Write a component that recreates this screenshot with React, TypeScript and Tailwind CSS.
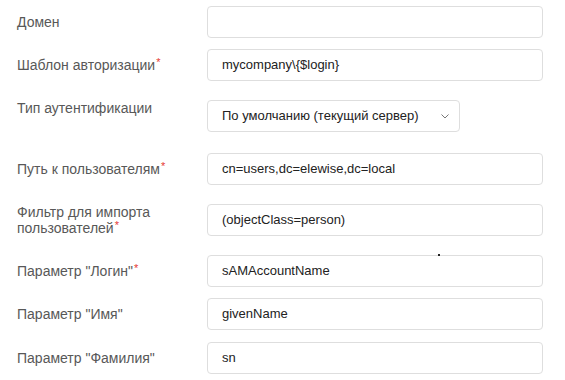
interface Field {
    label: string;
    required?: boolean;
    value: string;
    gap: string;
}

const fields: Field[] = [
    { label: 'Домен', value: '', gap: 'mt-[6px]' },
    { label: 'Шаблон авторизации', required: true, value: 'mycompany\\{$login}', gap: 'mt-[11px]' },
];

const lower: Field[] = [
    { label: 'Путь к пользователям', required: true, value: 'cn=users,dc=elewise,dc=local', gap: 'mt-[21px]' },
    { label: 'Фильтр для импорта пользователей', required: true, value: '(objectClass=person)', gap: 'mt-[19px]' },
    { label: 'Параметр "Логин"', required: true, value: 'sAMAccountName', gap: 'mt-[19px]' },
    { label: 'Параметр "Имя"', value: 'givenName', gap: 'mt-[11px]' },
    { label: 'Параметр "Фамилия"', value: 'sn', gap: 'mt-[12px]' },
];

function Label({ text, required }: { text: string; required?: boolean }) {
    return (
        <div className="w-[190px] shrink-0 pr-6 text-[14px] leading-[16px] text-[#585858]">
            {text}
            {required && <span className="ml-[1px] align-top text-[11px] leading-none text-[#e53935]">*</span>}
        </div>
    );
}

function Row({ field }: { field: Field }) {
    return (
        <div className={`${field.gap} flex h-[32px] items-center`}>
            <Label text={field.label} required={field.required} />
            <div className="flex h-[32px] flex-1 items-center rounded-[4px] border border-[#dedede] bg-white px-[14px] text-[13px] text-[#222]">
                {field.value}
            </div>
        </div>
    );
}

export default function App() {
    return (
        <div
            className="relative flex h-[380px] w-[565px] flex-col bg-white pl-[17px] pr-[22px]"
            style={{ fontFamily: '"Liberation Sans", Arial, sans-serif' }}
        >
            {fields.map((f) => (
                <Row key={f.label} field={f} />
            ))}
            <div className="mt-[19px] flex h-[32px] items-start">
                <Label text="Тип аутентификации" />
                <div className="flex h-[32px] w-[253px] items-center justify-between rounded-[4px] border border-[#dedede] bg-white pl-[14px] pr-[10px] text-[13px] text-[#222]">
                    <span>По умолчанию (текущий сервер)</span>
                    <svg width="8" height="5" viewBox="0 0 8 5" fill="none" className="mt-[1px]">
                        <path d="M0.5 0.5 L4 4 L7.5 0.5" stroke="#777" strokeWidth="1" />
                    </svg>
                </div>
            </div>
            {lower.map((f) => (
                <Row key={f.label} field={f} />
            ))}
            <span className="absolute left-[438px] top-[254px] h-[2px] w-[2px] bg-[#222]" />
        </div>
    );
}
